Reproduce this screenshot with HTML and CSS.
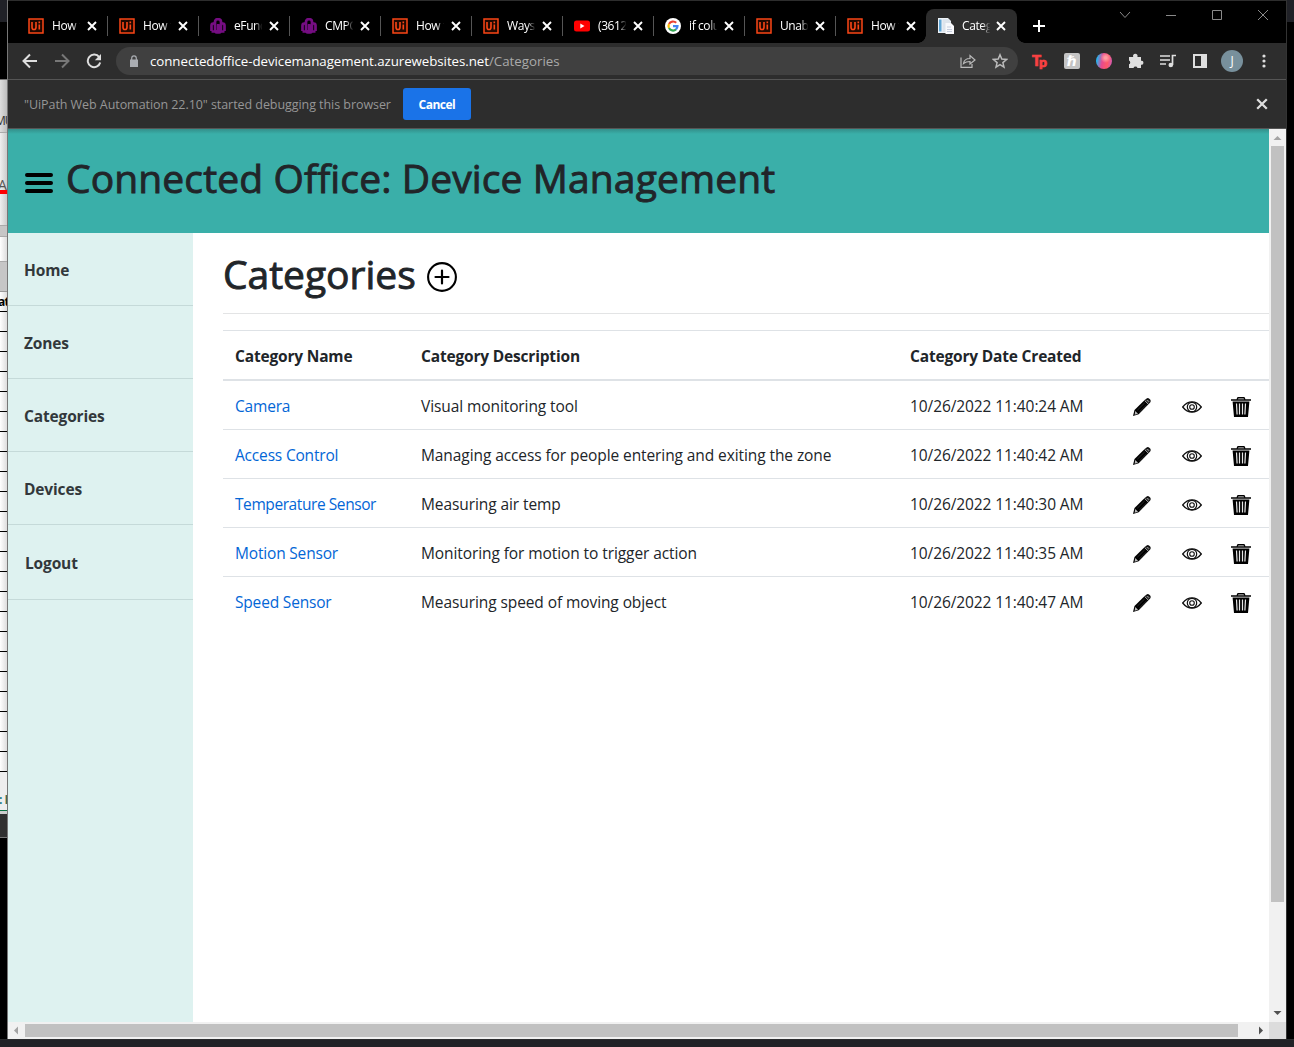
FILE: index.html
```
<!DOCTYPE html>
<html lang="en">
<head>
<meta charset="utf-8">
<title>Categories</title>
<link rel="stylesheet" href="styles.css">
</head>
<body>
<svg class="defs" width="0" height="0">
  <symbol id="ui" viewBox="0 0 16 16"><path d="M1 1h14v14H1z" fill="#200800" stroke="#fa4616" stroke-width="1.5"/><path d="M4 4v5.2q0 2.3 2 2.3t2-2.3V4M11.3 6.6v5M11.3 3.6v1.6" fill="none" stroke="#fa4616" stroke-width="1.6"/></symbol>
  <symbol id="knot" viewBox="0 0 16 16"><path d="M1.500 13V7.500q0-2 1.800-2t1.800 2V12q0 2.300 1.600 2.300T8.200 12V6M14.500 13V7.500q0-2-1.800-2t-1.800 2V12q0 2.300-1.600 2.300T7.800 12M5 8V4q0-2.800 3-2.800t3 2.800v4M1.500 13.500h3M11.500 13.500h3" fill="none" stroke="#750d82" stroke-width="2.700"/></symbol>
  <symbol id="yt" viewBox="0 0 16 16"><rect y="2.500" width="16" height="11" rx="2.500" fill="#f00"/><path d="M6.300 5.500v5l4.200-2.500z" fill="#fff"/></symbol>
  <symbol id="google" viewBox="0 0 16 16"><circle cx="8" cy="8" r="8" fill="#fff"/><g fill="none" stroke-width="2.200"><path d="M11.200 4.800A4.500 4.500 0 0 0 4 6" stroke="#ea4335"/><path d="M4 6a4.500 4.500 0 0 0 0 4" stroke="#fbbc05"/><path d="M4 10a4.500 4.500 0 0 0 7 1.400" stroke="#34a853"/><path d="M11 11.400A4.500 4.500 0 0 0 12.500 8.100H8" stroke="#4285f4"/></g></symbol>
  <symbol id="docs" viewBox="0 0 16 16"><path d="M0 0h10l3 3v12H0z" fill="#eef3f8"/><path d="M1 1.500h2.500v12H1z" fill="#5fa5d5"/><path d="M4.500 1h6l2.500 3v10H4.500z" fill="#dde4ec"/><path d="M7.500 5h5.500l3 3v8H7.500z" fill="#f8f9fc"/><path d="M9 9h4M9 11.500h5M9 13.500h5" stroke="#c5cddd"/></symbol>
  <symbol id="x" viewBox="0 0 10 10"><path d="M1 1l8 8M9 1L1 9" fill="none" stroke="currentColor" stroke-width="1.900"/></symbol>
  <symbol id="pencil" viewBox="0 0 20 20"><path d="M2.500 13L13.200 2.600l4 4L6.700 17.200 1 19z" fill="#000"/><path d="M3.300 14l2.700 2.700-3.400 1z" fill="#bbb"/><path d="M5.300 13.200L12.700 5.900M7.300 15.100l7.400-7.300" stroke="#555" stroke-width=".5"/><path d="M14.300 1.700q1.500-1.300 3 0l.9.900q1.200 1.400 0 2.900l-1 1-4-4z" fill="#111"/><path d="M12.700 3.500l3.700 3.700M15.300 3l1.800 1.800" stroke="#ccc" stroke-width=".9"/></symbol>
  <symbol id="eye" viewBox="0 0 20 20"><g fill="none" stroke="#111"><path d="M.7 10Q4.700 4.900 10 4.900T19.300 10Q15.300 15.100 10 15.100T.7 10z" stroke-width="1.300"/><circle cx="10" cy="10" r="4.700" stroke-width="1.200"/><circle cx="10" cy="10" r="2.300" stroke-width="1.100"/></g></symbol>
  <symbol id="trash" viewBox="0 0 20 20"><path d="M6 2.800L7 .7h6l1 2.100" fill="none" stroke="#000" stroke-width="1.400"/><path d="M0 2.300h20v1.500H0zM1.600 4.500h16.800L17 20H3z"/><path d="M5.500 6.500l.6 11M8.500 6.500v11M11.500 6.500v11M14.500 6.500l-.6 11" stroke="#e8e8e8" stroke-width="1.200"/></symbol>
</svg>
<div class="desktop">
  <div class="behind-left">
    <div class="b-top"></div><div class="b-black"></div>
    <div class="b-ribbon"><span>MU</span></div>
    <div class="b-tools"><span>A</span></div>
    <div class="b-gap"></div><div class="b-formula"></div><div class="b-head"></div>
    <div class="b-cells"><b>at</b></div>
    <div class="b-sheet"><span>:</span><i>I</i></div>
    <div class="b-status"></div>
  </div>
  <div class="window">
    <div class="tabs">
      <div class="tab"><svg><use href="#ui"/></svg><span>How t</span><svg class="close"><use href="#x"/></svg></div>
      <div class="tab"><svg><use href="#ui"/></svg><span>How t</span><svg class="close"><use href="#x"/></svg></div>
      <div class="tab"><svg><use href="#knot"/></svg><span>eFund</span><svg class="close"><use href="#x"/></svg></div>
      <div class="tab"><svg><use href="#knot"/></svg><span>CMPG</span><svg class="close"><use href="#x"/></svg></div>
      <div class="tab"><svg><use href="#ui"/></svg><span>How t</span><svg class="close"><use href="#x"/></svg></div>
      <div class="tab"><svg><use href="#ui"/></svg><span>Ways</span><svg class="close"><use href="#x"/></svg></div>
      <div class="tab"><svg><use href="#yt"/></svg><span>(3612</span><svg class="close"><use href="#x"/></svg></div>
      <div class="tab"><svg><use href="#google"/></svg><span>if colu</span><svg class="close"><use href="#x"/></svg></div>
      <div class="tab"><svg><use href="#ui"/></svg><span>Unab</span><svg class="close"><use href="#x"/></svg></div>
      <div class="tab last"><svg><use href="#ui"/></svg><span>How t</span><svg class="close"><use href="#x"/></svg></div>
      <div class="tab active"><svg><use href="#docs"/></svg><span>Categ</span><svg class="close"><use href="#x"/></svg></div>
      <svg class="plus" viewBox="0 0 12 12"><path d="M6 0v12M0 6h12" stroke="#fff" stroke-width="2"/></svg>
      <div class="controls">
        <svg viewBox="0 0 12 12"><path d="M1 3l5 5.500L11 3"/></svg>
        <svg viewBox="0 0 12 12"><path d="M1 6.500h10"/></svg>
        <svg viewBox="0 0 12 12"><path d="M1.500 1.500h9v9h-9z"/></svg>
        <svg viewBox="0 0 12 12"><path d="M1 1l10 10M11 1L1 11"/></svg>
      </div>
    </div>
    <div class="toolbar">
      <svg class="nav" viewBox="0 0 16 16"><path d="M15 8H2M8 1.500L1.500 8 8 14.500"/></svg>
      <svg class="nav off" viewBox="0 0 16 16"><path d="M1 8h13M8 1.500L14.500 8 8 14.500"/></svg>
      <svg class="nav" viewBox="0 0 16 16"><path d="M13.200 4.200A6.300 6.300 0 1 0 14.200 9.500"/><path d="M15 1v6.200H8.800z" fill="#dedede" stroke="none"/></svg>
      <div class="address">
        <svg class="lock" viewBox="0 0 8 12"><path d="M0 4.500h8V12H0z" fill="#aaadb2"/><path d="M1.700 5V3.200a2.300 2.300 0 0 1 4.600 0V5" fill="none" stroke="#aaadb2" stroke-width="1.200"/></svg>
        <span class="host">connectedoffice-devicemanagement.azurewebsites.net</span><span class="path">/Categories</span>
        <svg class="share" viewBox="0 0 16 16"><path d="M1 4.500v9.800h11V11M3.500 10.500q.8-5 6.500-5V2.500l5 4.500-5 4V8.500q-4 0-6.500 2z"/></svg>
        <svg class="star" viewBox="0 0 16 16"><path d="M8 1.800l1.800 4.300 4.700.4-3.600 3.100 1.100 4.500L8 11.700 4 14.100l1.100-4.500L1.500 6.500l4.700-.4z"/></svg>
      </div>
      <div class="extensions">
        <span class="tp">T<small>p</small></span>
        <span class="honey">ℏ</span>
        <span class="orb"></span>
        <svg viewBox="0 0 16 16"><path d="M1 4h4.200a2.300 2.300 0 1 1 4.200 0H13v3.800a2 2 0 1 1 0 3.900V15H9.500a2.100 2.100 0 0 0-4 0H1v-3.700a2 2 0 0 0 0-3.700z" fill="#dedede"/></svg>
        <svg viewBox="0 0 16 16"><path d="M0 3h10M0 7h10M0 11h6M12.500 12V2.500H16" fill="none" stroke="#dedede" stroke-width="1.700"/><circle cx="10.800" cy="12" r="2.300" fill="#dedede"/></svg>
        <svg viewBox="0 0 16 16"><path d="M1 1h14v14H1zM3 3v10h6V3z" fill="#dedede" fill-rule="evenodd"/></svg>
        <span class="avatar">J</span>
        <svg viewBox="0 0 16 16" fill="#dedede"><circle cx="8" cy="3" r="1.600"/><circle cx="8" cy="8" r="1.600"/><circle cx="8" cy="13" r="1.600"/></svg>
      </div>
    </div>
    <div class="infobar"><span>"UiPath Web Automation 22.10" started debugging this browser</span><button>Cancel</button><svg><use href="#x"/></svg></div>
    <div class="viewport">
      <div class="page">
        <header class="banner"><svg viewBox="0 0 28 20"><path d="M2 2h24M2 10h24M2 18h24" stroke="#000" stroke-width="4" stroke-linecap="round"/></svg><h1>Connected Office: Device Management</h1></header>
        <div class="columns">
          <nav class="sidebar"><a>Home</a><a>Zones</a><a>Categories</a><a>Devices</a><a class="logout">Logout</a></nav>
          <main>
            <div class="heading"><h1>Categories</h1><svg viewBox="0 0 30 30"><circle cx="15" cy="15" r="13.900" fill="none" stroke="#000" stroke-width="2.100"/><path d="M15 8.500v13M8.500 15h13" stroke="#000" stroke-width="2.200" stroke-linecap="round"/></svg></div>
            <table>
              <thead><tr><th class="c1">Category Name</th><th class="c2">Category Description</th><th class="c3">Category Date Created</th><th class="c4"></th></tr></thead>
              <tbody>
                <tr><td><a>Camera</a></td><td>Visual monitoring tool</td><td>10/26/2022 11:40:24 AM</td><td><div class="actions"><svg><use href="#pencil"/></svg><svg><use href="#eye"/></svg><svg><use href="#trash"/></svg></div></td></tr>
                <tr><td><a>Access Control</a></td><td>Managing access for people entering and exiting the zone</td><td>10/26/2022 11:40:42 AM</td><td><div class="actions"><svg><use href="#pencil"/></svg><svg><use href="#eye"/></svg><svg><use href="#trash"/></svg></div></td></tr>
                <tr><td><a class="tight">Temperature Sensor</a></td><td>Measuring air temp</td><td>10/26/2022 11:40:30 AM</td><td><div class="actions"><svg><use href="#pencil"/></svg><svg><use href="#eye"/></svg><svg><use href="#trash"/></svg></div></td></tr>
                <tr><td><a>Motion Sensor</a></td><td>Monitoring for motion to trigger action</td><td>10/26/2022 11:40:35 AM</td><td><div class="actions"><svg><use href="#pencil"/></svg><svg><use href="#eye"/></svg><svg><use href="#trash"/></svg></div></td></tr>
                <tr><td><a>Speed Sensor</a></td><td>Measuring speed of moving object</td><td>10/26/2022 11:40:47 AM</td><td><div class="actions"><svg><use href="#pencil"/></svg><svg><use href="#eye"/></svg><svg><use href="#trash"/></svg></div></td></tr>
              </tbody>
            </table>
          </main>
        </div>
      </div>
      <div class="vbar"><svg viewBox="0 0 17 17"><path d="M4.500 11h8l-4-4z" fill="#a3a3a3"/></svg><div class="thumb"></div><svg class="end" viewBox="0 0 17 17"><path d="M4.500 6h8l-4 4z" fill="#505050"/></svg></div>
      <div class="hbar"><svg viewBox="0 0 17 17"><path d="M10 4.500v8l-4-4z" fill="#a3a3a3"/></svg><div class="thumb"></div><svg class="end" viewBox="0 0 17 17"><path d="M7 4.500v8l4-4z" fill="#505050"/></svg></div>
      <div class="corner"></div>
    </div>
  </div>
  <div class="behind-right"></div>
  <div class="taskbar"></div>
</div>
</body>
</html>
```
FILE: styles.css
```
* { box-sizing: border-box; }
body { margin: 0; width: 1294px; height: 1047px; overflow: hidden; background: #000; font-family: "Open Sans", sans-serif; color: #212529; }
svg { display: block; flex: none; }
.defs { position: absolute; }
.desktop { display: grid; grid-template-columns: 8px 1278px 8px; grid-template-rows: 1039px 8px; }
.taskbar { grid-column: 1 / -1; background: #212227; border-top: 1px solid #2b2c2e; }

/* spreadsheet window showing at the left edge */
.behind-left { border-right: 1px solid #777; overflow: hidden; font-size: 12px; }
.behind-left span, .behind-left b, .behind-left i { display: block; white-space: nowrap; }
.b-top { height: 22px; background: #202127; }
.b-black { height: 57px; background: #000; }
.b-ribbon { height: 54px; padding: 33px 0 0; border-top: 1px solid #777; border-bottom: 1px solid #aaa; background: linear-gradient(90deg, #ddd, #bdbdbd); color: #333; }
.b-ribbon span { margin-left: -5px; line-height: 16px; letter-spacing: -1px; }
.b-tools { height: 93px; padding-top: 43px; background: linear-gradient(90deg, #efefef, #ccc); color: #555; border-bottom: 1px solid #aaa; }
.b-tools span { margin-left: -2px; height: 18px; line-height: 18px; border-bottom: 4px solid #f00; font-size: 14px; }
.b-gap { height: 11px; background: #c6c6c6; border-bottom: 1px solid #aaa; }
.b-formula { height: 25px; background: linear-gradient(90deg, #fff, #ddd); border-bottom: 1px solid #aaa; }
.b-head { height: 30px; background: #c6c6c6; border-bottom: 1px solid #999; }
.b-cells { height: 480px; background: repeating-linear-gradient(180deg, transparent 0 19px, #000 19px 20px), linear-gradient(90deg, #fff, #ddd); color: #000; }
.b-cells b { line-height: 20px; margin-left: -2px; font-size: 12px; letter-spacing: -.8px; }
.b-sheet { height: 42px; padding-top: 19px; display: flex; gap: 2px; border-bottom: 3px solid #ccc; background: linear-gradient(#0a7040, #0a7040) 0 38px / 8px 2px no-repeat, #eee; color: #217c87; line-height: 18px; font-weight: 700; }
.b-sheet span { margin-left: -1px; }
.b-sheet i { color: #3d6b54; font-style: normal; }
.b-status { height: 24px; background: #303030; border-bottom: 1px solid #777; }
.behind-right { border-left: 1px solid #333; background: linear-gradient(#202127 22px, #000 22px); }

.window { display: flex; flex-direction: column; background: #2d2d2d; }
.tabs { height: 43px; padding: 8px 0 0 9px; display: flex; background: #000; border-top: 1px solid #2d2d2d; font-size: 12px; color: #fff; }
.tab { width: 91px; height: 34px; padding: 0 10px 1px 11px; display: flex; align-items: center; position: relative; }
.tab:not(.last):not(.active)::after { content: ""; position: absolute; right: 0; top: 7px; width: 1px; height: 20px; background: #555; }
.tab > svg { width: 16px; height: 16px; }
.tab span { width: 29px; margin: -1px 6px 0 8px; overflow: hidden; white-space: nowrap; letter-spacing: -.4px; -webkit-mask-image: linear-gradient(90deg, #000 70%, transparent 98%); }
.tab .close { width: 10px; height: 10px; }
.tab.active { background: #2d2d2d; border-radius: 8px 8px 0 0; margin-left: -1px; padding-left: 12px; }
.tab.active span { margin-right: 5px; }
.tab.active::before { content: ""; position: absolute; z-index: 1; left: -8px; right: -8px; bottom: 0; height: 8px; background: radial-gradient(circle at 0 0, transparent 7.5px, #2d2d2d 8px) 0 0 / 8px 8px no-repeat, radial-gradient(circle at 100% 0, transparent 7.5px, #2d2d2d 8px) 100% 0 / 8px 8px no-repeat; }
.plus { width: 12px; height: 12px; margin: 11px 0 0 16px; }
.controls { display: flex; gap: 34px; margin: 0 17px 0 auto; }
.controls svg { width: 12px; height: 12px; fill: none; stroke: #8a8a8a; stroke-width: 1; }

.toolbar { height: 37px; display: flex; align-items: center; padding: 0 14px; border-bottom: 1px solid #555; }
.nav { width: 16px; height: 16px; margin-right: 16px; fill: none; stroke: #dedede; stroke-width: 2; }
.nav.off { stroke: #777; }
.address { width: 902px; height: 28px; margin-left: -2px; padding: 0 10px 0 14px; display: flex; align-items: center; border-radius: 14px; background: #404040; font-size: 13.3px; color: #fff; }
.lock { width: 8px; height: 12px; margin-right: 12px; }
.host { letter-spacing: -.05px; }
.path { color: #aaa; }
.share, .star { width: 16px; height: 16px; fill: none; stroke: #bbb; stroke-width: 1.2; }
.share { margin-left: auto; }
.star { margin-left: 16px; stroke-width: 1.5; }
.extensions { display: flex; align-items: center; gap: 16px; margin-left: 14px; }
.extensions svg, .extensions > span { width: 16px; height: 16px; flex: none; }
.extensions .tp { color: #fa4142; font: 900 15px/15px Lato, sans-serif; display: flex; -webkit-text-stroke: .7px #fa4142; }
.tp small { font-size: 14px; line-height: 17px; margin-left: -2px; }
.honey { border-radius: 2px; background: #c4c4c4; color: #fff; text-align: center; font: bold 14px/16px "DejaVu Sans", sans-serif; }
.orb { border-radius: 50%; background: radial-gradient(circle at 60% 30%, #ff9ca2 0 8%, transparent 35%), linear-gradient(100deg, #21b8f4 10%, #e64990 40%, #ff5967 70%, #c55ac9); }
.extensions .avatar { width: 22px; height: 22px; margin: 0 -3px; border-radius: 50%; background: #78909c; color: #fff; font-size: 12px; line-height: 21px; text-align: center; }

.infobar { height: 49px; padding: 0 18px 0 16px; display: flex; align-items: center; font-size: 12.5px; letter-spacing: -.06px; color: #969696; border-bottom: 1px solid #555; }
.infobar button { width: 68px; height: 32px; margin-left: 12px; padding: 0; border: 0; border-radius: 3px; background: #1a73e8; color: #fff; font: 700 12px "Open Sans", sans-serif; letter-spacing: -.5px; }
.infobar svg { width: 12px; height: 12px; margin-left: auto; color: #dedede; }

.viewport { height: 910px; display: grid; grid-template-columns: 1261px 17px; grid-template-rows: 893px 17px; }
.page { background: #fff; overflow: hidden; display: flex; flex-direction: column; }
.banner { height: 104px; padding-left: 17px; display: flex; align-items: center; gap: 13px; background: linear-gradient(#338f8a, #3aafa9 5px); }
.banner svg { width: 28px; height: 20px; margin-top: 4px; }
h1 { margin: 0; font-weight: 500; font-size: 39px; line-height: 48px; white-space: nowrap; -webkit-text-stroke: .9px #212529; }
.banner h1 { letter-spacing: .12px; margin-top: -6px; }
.columns { flex: 1; display: flex; }
.sidebar { width: 185px; background: #def2f0; font-size: 15.5px; font-weight: 700; letter-spacing: -.15px; color: #32383b; }
.sidebar a { height: 73px; padding: 1px 0 0 16px; display: flex; align-items: center; border-bottom: 1px solid #c5dad9; }
.sidebar .logout { height: 75px; padding-left: 17px; }
main { flex: 1; padding-left: 30px; }
.heading { height: 81px; padding-top: 17px; display: flex; border-bottom: 1px solid #e3e4e5; }
.heading h1 { width: 204px; letter-spacing: -.02px; }
.heading svg { width: 30px; height: 30px; margin-top: 12px; }
table { width: 1046px; margin-top: 16px; border-collapse: separate; border-spacing: 0; table-layout: fixed; font-size: 15.5px; letter-spacing: -.09px; }
th, td { height: 49px; padding: 1px 12px 0; border-top: 1px solid #dee2e6; text-align: left; white-space: nowrap; line-height: 24px; }
th { height: 51px; border-bottom: 2px solid #dee2e6; letter-spacing: -.18px; }
tbody tr:first-child td { height: 48px; border-top: 0; }
.c1 { width: 186px; }
.c2 { width: 489px; }
.c3 { width: 222px; }
.c4 { width: 149px; }
td a { color: #0366d6; letter-spacing: -.18px; }
td a.tight { letter-spacing: -.42px; }
.actions { display: flex; gap: 30px; margin-top: 2px; }
.actions svg { width: 20px; height: 20px; }
.actions svg:last-child { margin-left: -1px; }

.vbar, .hbar { background: #f1f1f1; display: flex; }
.vbar { flex-direction: column; }
.vbar svg, .hbar svg { width: 17px; height: 17px; }
.vbar .thumb { width: 13px; height: 756px; margin-left: 2px; background: #c1c1c1; }
.hbar .thumb { width: 1213px; height: 13px; margin-top: 2px; background: #c1c1c1; }
.vbar .end { margin-top: auto; }
.hbar .end { margin-left: auto; }
.corner { background: #dcdcdc; }
```
